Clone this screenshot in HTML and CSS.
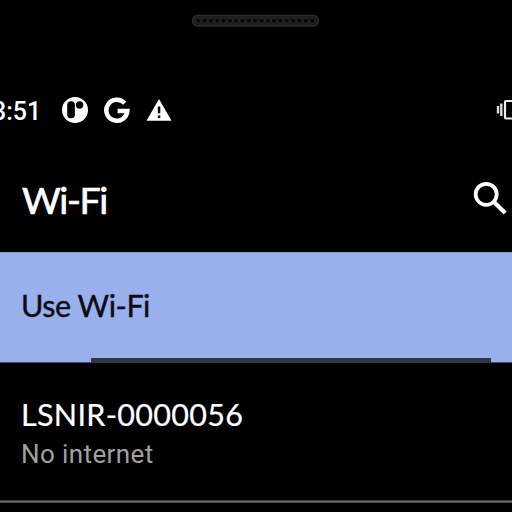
FILE: index.html
```html
<!DOCTYPE html>
<html lang="en">
<head>
<meta charset="utf-8">
<title>Wi-Fi</title>
<link rel="stylesheet" href="styles.css">
</head>
<body>
<main class="phone">
  <div class="bezel">
    <svg class="speaker" width="130" height="14" viewBox="0 0 130 14">
      <defs><pattern id="holes" x="4" y="0" width="6.34" height="14" patternUnits="userSpaceOnUse"><circle cx="3.1" cy="7.7" r="2.7" fill="#070707" stroke="#303030" stroke-width=".8"/></pattern></defs>
      <rect x="1.5" y="2.5" width="126" height="10.5" rx="5.2" fill="#1b1b1b" stroke="#2b2b2b" stroke-width="1.5"/>
      <rect x="4" y="1" width="121" height="12" fill="url(#holes)"/>
    </svg>
  </div>
  <header class="status">
    <span class="clock">3:51</span>
    <svg class="notice" width="28" height="28" viewBox="0 0 28 28">
      <circle cx="14" cy="14" r="13" fill="#fff"/>
      <rect x="6.2" y="5.3" width="7.7" height="17" rx="3.85" fill="#000"/>
      <circle cx="18.6" cy="9" r="3.7" fill="#000"/>
    </svg>
    <svg class="google" width="28" height="28" viewBox="0 0 28 28">
      <path d="M21.7 7.3A10.5 10.5 0 1 0 24.3 15H14.6" fill="none" stroke="#fff" stroke-width="4.5"/>
    </svg>
    <svg class="warning" width="26" height="24" viewBox="0 0 26 24">
      <path d="M13 1 25.5 22.8H.5Z" fill="#fff"/>
      <path d="M11.8 8.5h2.5v6.8h-2.5zM11.8 17.4h2.5v2.6h-2.5z" fill="#000"/>
    </svg>
    <svg class="vibrate" width="16" height="22" viewBox="0 0 16 22">
      <path d="M2 7v7.5M5.3 4.5V17" stroke="#ddd" stroke-width="2.4"/>
      <rect x="9" y="2" width="13" height="17.5" rx="1" fill="none" stroke="#eee" stroke-width="2.2"/>
    </svg>
  </header>
  <div class="toolbar">
    <h1 class="title">Wi-Fi</h1>
    <svg class="search" width="38" height="38" viewBox="0 0 38 38">
      <circle cx="14.2" cy="14.3" r="10.5" fill="none" stroke="#fff" stroke-width="3.8"/>
      <path d="m22 22 11.2 11" stroke="#fff" stroke-width="4.2"/>
    </svg>
  </div>
  <section class="toggle">
    <span class="toggle-label">Use Wi-Fi</span>
    <span class="progress"></span>
  </section>
  <section class="network">
    <div class="ssid">LSNIR-0000056</div>
    <div class="state">No internet</div>
  </section>
  <div class="divider"></div>
</main>
</body>
</html>
```
FILE: styles.css
```css
* { box-sizing: border-box; }
body { margin: 0; background: #000; }
.phone { width: 512px; height: 512px; overflow: hidden; background: #000; color: #fff; font-family: Lato, "Open Sans", sans-serif; display: flex; flex-direction: column; }
.bezel { height: 85px; padding: 13px 0 0 191px; }
.speaker { display: block; }
.status { height: 50px; display: flex; align-items: center; flex-shrink: 0; }
.clock { width: 62px; margin-left: -8px; padding-top: 3px; font: 500 25px/50px Roboto, sans-serif; white-space: nowrap; }
.notice { margin-left: 7px; }
.google { margin-left: 14px; }
.warning { margin-left: 15px; }
.vibrate { margin-left: auto; flex-shrink: 0; }
.toolbar { height: 117px; display: flex; justify-content: space-between; padding: 45px 2px 0 22px; }
.title { margin: -2px 0 0; font-size: 37.5px; font-weight: 400; line-height: 44px; letter-spacing: -1.4px; -webkit-text-stroke: .7px #fff; }
.search { display: block; }
.toggle { height: 111px; flex-shrink: 0; background: #99b0ed; color: #0a0c14; border-top: 1px solid #829acb; border-bottom: 1px solid #40507a; padding: 32px 0 0 22px; display: flex; flex-direction: column; justify-content: space-between; }
.toggle-label { margin-left: -1px; font-size: 30.5px; font-weight: 400; line-height: 40px; letter-spacing: -.45px; -webkit-text-stroke: .4px #0a0c14; }
.progress { width: 400px; height: 5px; margin: 0 0 -1px 69px; background: #2f3746; }
.network { height: 137px; padding: 32px 0 0 22px; }
.ssid { margin-left: -1px; font-size: 30.5px; line-height: 38px; letter-spacing: .3px; -webkit-text-stroke: .2px #fff; }
.state { margin: 2px 0 0 -1px; font: 400 26px/38px Roboto, sans-serif; letter-spacing: .4px; color: #a1a1a1; }
.divider { height: 3px; background: #6c6c6c; border-top: 1px solid #3a3a3a; border-bottom: 1px solid #4a4a4a; }
```
